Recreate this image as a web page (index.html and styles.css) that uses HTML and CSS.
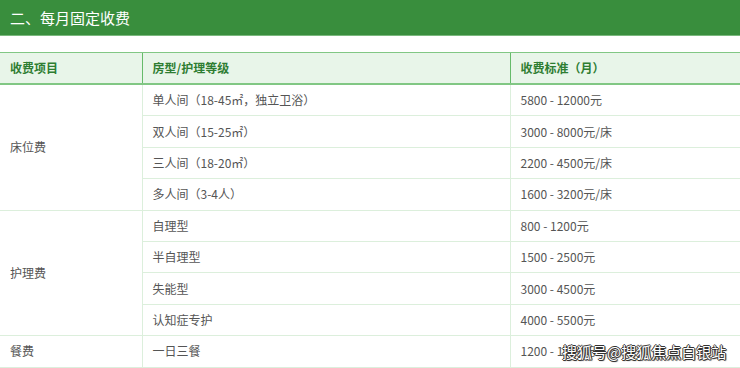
FILE: index.html
```html
<!DOCTYPE html>
<html lang="zh-CN">
<head>
<meta charset="utf-8">
<link rel="stylesheet" href="styles.css">
</head>
<body>
<div class="page">
  <div class="title-bar">二、每月固定收费</div>
  <table class="fee-table">
    <colgroup>
      <col class="c1"><col class="c2"><col class="c3">
    </colgroup>
    <thead>
      <tr><th>收费项目</th><th>房型/护理等级</th><th>收费标准（月）</th></tr>
    </thead>
    <tbody>
      <tr><td rowspan="4">床位费</td><td>单人间（18-45㎡，独立卫浴）</td><td>5800 - 12000元</td></tr>
      <tr><td>双人间（15-25㎡）</td><td>3000 - 8000元/床</td></tr>
      <tr><td>三人间（18-20㎡）</td><td>2200 - 4500元/床</td></tr>
      <tr><td>多人间（3-4人）</td><td>1600 - 3200元/床</td></tr>
      <tr><td rowspan="4">护理费</td><td>自理型</td><td>800 - 1200元</td></tr>
      <tr><td>半自理型</td><td>1500 - 2500元</td></tr>
      <tr><td>失能型</td><td>3000 - 4500元</td></tr>
      <tr><td>认知症专护</td><td>4000 - 5500元</td></tr>
      <tr><td>餐费</td><td>一日三餐</td><td>1200 - 1800元</td></tr>
    </tbody>
  </table>
  <div class="watermark">搜狐号@搜狐焦点白银站</div>
</div>
</body>
</html>
```
FILE: styles.css
```css
html, body {
  margin: 0;
  padding: 0;
  background: #fff;
}
body {
  font-family: "Noto Sans CJK SC", "Noto Sans", sans-serif;
  width: 740px;
  height: 368px;
  overflow: hidden;
}
.page {
  position: relative;
  width: 740px;
  height: 368px;
}
.title-bar {
  height: 35px;
  background: #398e3d;
  color: #fff;
  font-size: 15px;
  line-height: 35px;
  padding-left: 10px;
  box-shadow: 0 1px 0 #7ab87d;
  margin-bottom: 17px;
}
.fee-table {
  width: 740px;
  border-collapse: collapse;
  table-layout: fixed;
  font-size: 12px;
}
.c1 { width: 142px; }
.c2 { width: 368px; }
.c3 { width: 230px; }
.fee-table th {
  background: #e8f5e9;
  color: #2e7d32;
  font-weight: bold;
  text-align: left;
  height: 30px;
  padding: 0 0 0 10px;
  border-top: 1px solid #81c784;
  border-bottom: 2px solid #81c784;
  border-left: 1px solid #66bb6a;
  line-height: 30px;
}
.fee-table th:first-child { border-left: none; }
.fee-table td {
  color: #555;
  height: 30.4px;
  padding: 0 0 0 10px;
  line-height: 30px;
  border-bottom: 1px solid #dcefdc;
  border-left: 1px solid #dcefdc;
  vertical-align: middle;
}
.fee-table tbody tr:nth-child(1) td:first-child,
.fee-table tbody tr:nth-child(5) td:first-child,
.fee-table tbody tr:nth-child(9) td:first-child { border-left: none; }
.watermark {
  position: absolute;
  left: 562px;
  top: 341px;
  font-size: 15px;
  line-height: 22px;
  color: #fff;
  text-shadow: 1px 0 0 #333, -1px 0 0 #333, 0 1px 0 #333, 0 -1px 0 #333, 1px 1px 1px #333;
}
```
